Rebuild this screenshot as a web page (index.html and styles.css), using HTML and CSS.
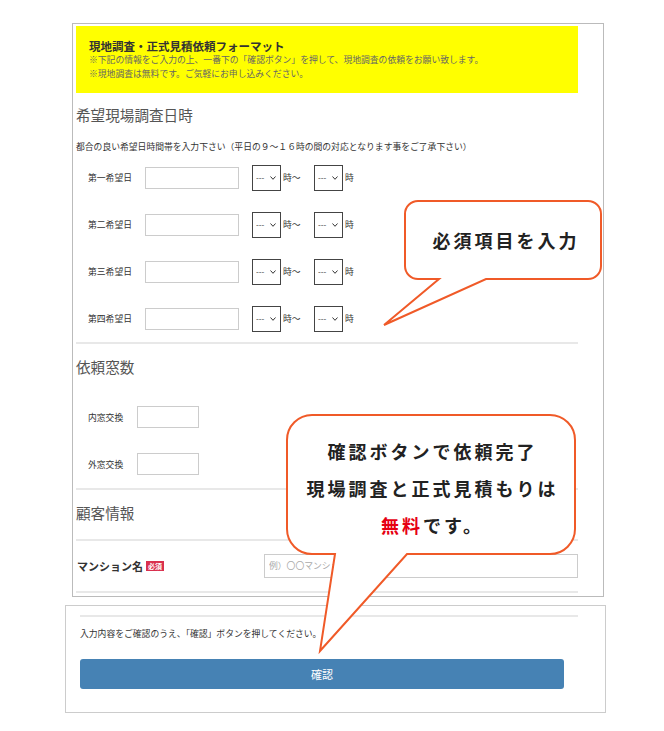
FILE: index.html
```html
<!DOCTYPE html>
<html lang="ja">
<head>
    <meta charset="UTF-8">
    <meta name="viewport" content="width=device-width, initial-scale=1.0">
    <title>現地調査・正式見積依頼フォーマット</title>
    <link rel="stylesheet" href="styles.css">
</head>
<body>
    <div class="page">
        <div class="form-box">
            <div class="notice">
                <p class="notice-title">現地調査・正式見積依頼フォーマット</p>
                <p>※下記の情報をご入力の上、一番下の「確認ボタン」を押して、現地調査の依頼をお願い致します。</p>
                <p>※現地調査は無料です。ご気軽にお申し込みください。</p>
            </div>

            <h2>希望現場調査日時</h2>
            <p class="desc">都合の良い希望日時間帯を入力下さい（平日の９～１６時の間の対応となります事をご了承下さい）</p>
            <div class="rows">
                <div class="row">
                    <label class="label-date">第一希望日</label>
                    <input type="text" class="input-date">
                    <span class="sel"><select><option>---</option></select><svg viewBox="0 0 6 4"><polyline points="0.5,0.5 3,3.3 5.5,0.5"/></svg></span>
                    <span class="unit-from">時～</span>
                    <span class="sel"><select><option>---</option></select><svg viewBox="0 0 6 4"><polyline points="0.5,0.5 3,3.3 5.5,0.5"/></svg></span>
                    <span class="unit-to">時</span>
                </div>
                <div class="row">
                    <label class="label-date">第二希望日</label>
                    <input type="text" class="input-date">
                    <span class="sel"><select><option>---</option></select><svg viewBox="0 0 6 4"><polyline points="0.5,0.5 3,3.3 5.5,0.5"/></svg></span>
                    <span class="unit-from">時～</span>
                    <span class="sel"><select><option>---</option></select><svg viewBox="0 0 6 4"><polyline points="0.5,0.5 3,3.3 5.5,0.5"/></svg></span>
                    <span class="unit-to">時</span>
                </div>
                <div class="row">
                    <label class="label-date">第三希望日</label>
                    <input type="text" class="input-date">
                    <span class="sel"><select><option>---</option></select><svg viewBox="0 0 6 4"><polyline points="0.5,0.5 3,3.3 5.5,0.5"/></svg></span>
                    <span class="unit-from">時～</span>
                    <span class="sel"><select><option>---</option></select><svg viewBox="0 0 6 4"><polyline points="0.5,0.5 3,3.3 5.5,0.5"/></svg></span>
                    <span class="unit-to">時</span>
                </div>
                <div class="row">
                    <label class="label-date">第四希望日</label>
                    <input type="text" class="input-date">
                    <span class="sel"><select><option>---</option></select><svg viewBox="0 0 6 4"><polyline points="0.5,0.5 3,3.3 5.5,0.5"/></svg></span>
                    <span class="unit-from">時～</span>
                    <span class="sel"><select><option>---</option></select><svg viewBox="0 0 6 4"><polyline points="0.5,0.5 3,3.3 5.5,0.5"/></svg></span>
                    <span class="unit-to">時</span>
                </div>
            </div>
            <hr class="sep">

            <h2>依頼窓数</h2>
            <div class="rows rows-count">
                <div class="row">
                    <label class="label-count">内窓交換</label>
                    <input type="text" class="input-count">
                </div>
                <div class="row">
                    <label class="label-count">外窓交換</label>
                    <input type="text" class="input-count">
                </div>
            </div>
            <hr class="sep">

            <h2>顧客情報</h2>
            <hr class="sep sep-head">
            <div class="row row-name">
                <label class="label-name">マンション名<span class="badge">必須</span></label>
                <input type="text" class="input-name" placeholder="例）〇〇マンション">
            </div>
            <hr class="sep">
        </div>

        <div class="confirm-box">
            <hr class="sep">
            <p class="confirm-text">入力内容をご確認のうえ、「確認」ボタンを押してください。</p>
            <button class="confirm-btn">確認</button>
        </div>
    </div>

    <svg class="callouts" width="664" height="731" viewBox="0 0 664 731">
        <path d="M418,201 H588 A13,13 0 0 1 601,214 V266 A13,13 0 0 1 588,279 H486 L384,325 L439,279 H418 A13,13 0 0 1 405,266 V214 A13,13 0 0 1 418,201 Z"/>
        <path d="M312,415 H550 A25,25 0 0 1 575,440 V529 A25,25 0 0 1 550,554 H407 L320,651 L335,554 H312 A25,25 0 0 1 287,529 V440 A25,25 0 0 1 312,415 Z"/>
    </svg>
    <div class="bubble-text bubble-one">必須項目を入力</div>
    <div class="bubble-text bubble-two">
        確認ボタンで依頼完了<br>
        現場調査と正式見積もりは<br>
        <span class="free">無料</span>です。
    </div>
</body>
</html>
```

FILE: styles.css
```css
body {
    margin: 0;
    width: 664px;
    height: 731px;
    position: relative;
    background: #fff;
    color: #333;
    font-family: "Noto Sans CJK JP", "Noto Sans", sans-serif;
}
p {
    margin: 0;
}
.page {
    padding-top: 23px;
}
.form-box {
    box-sizing: border-box;
    width: 532px;
    margin-left: 72px;
    padding: 2px 25px 3px 3px;
    border: 1px solid #bbb;
}
.notice {
    box-sizing: border-box;
    height: 67px;
    padding: 13px 13px 0;
    background: #ffff00;
}
.notice p {
    font-size: 8.8px;
    line-height: 14px;
    color: #666;
}
.notice .notice-title {
    font-size: 11.5px;
    font-weight: bold;
    color: #333;
}
h2 {
    margin: 12px 0 0;
    font-size: 14.6px;
    font-weight: normal;
    line-height: 20px;
    color: #555;
}
.sep + h2 {
    margin-top: 13px;
}
.desc {
    margin-top: 15px;
    font-size: 8.8px;
    line-height: 14px;
}
.sep {
    height: 2px;
    margin: 0;
    border: none;
    background: #e8e8e8;
}
.sep-head {
    margin-top: 16px;
}
.row {
    display: flex;
    align-items: center;
    height: 47px;
    font-size: 8.8px;
}
.rows-count {
    margin-top: 16.5px;
}
.label-date {
    width: 57px;
    padding-left: 12px;
}
.label-count {
    width: 49px;
    padding-left: 12px;
}
input {
    box-sizing: border-box;
    margin: 0;
    border: 1px solid #ccc;
    background: #fff;
    font-family: inherit;
}
.input-date {
    width: 94px;
    height: 22px;
}
.input-count {
    width: 62px;
    height: 22px;
}
.sel {
    position: relative;
    display: inline-block;
    width: 29px;
    height: 26px;
    margin-left: 13px;
}
.sel + .unit-from + .sel {
    margin-left: 0;
}
.sel select {
    appearance: none;
    -webkit-appearance: none;
    box-sizing: border-box;
    width: 29px;
    height: 26px;
    margin: 0;
    padding: 0 0 0 3px;
    border: 1px solid #444;
    border-radius: 0;
    background: #fff;
    color: #333;
    font-family: inherit;
    font-size: 8px;
}
.sel svg {
    position: absolute;
    right: 5px;
    top: 11px;
    width: 6px;
    height: 4px;
    fill: none;
    stroke: #333;
    stroke-width: 1;
}
.unit-from {
    width: 31px;
    padding-left: 2px;
}
.unit-to {
    padding-left: 2px;
}
.row-name {
    height: 50px;
}
.label-name {
    display: flex;
    align-items: center;
    width: 187px;
    padding-left: 1px;
    font-size: 11px;
    font-weight: bold;
    color: #333;
}
.badge {
    margin-left: 3px;
    padding: 0 2px;
    background: #d9304e;
    color: #fff;
    font-size: 7px;
    line-height: 10px;
}
.input-name {
    flex: 1;
    height: 24px;
    padding-left: 4px;
    font-size: 8.8px;
}
.input-name::placeholder {
    color: #aaa;
}
.confirm-box {
    box-sizing: border-box;
    width: 541px;
    margin: 8px 0 0 65px;
    padding: 9px 27px 23px 14px;
    border: 1px solid #ccc;
}
.confirm-text {
    margin-top: 10px;
    font-size: 8.8px;
    line-height: 14px;
}
.confirm-btn {
    display: block;
    width: 484px;
    height: 30px;
    margin-top: 18px;
    border: none;
    border-radius: 3px;
    background: #4682b4;
    color: #fff;
    font-family: inherit;
    font-size: 11px;
}
.callouts {
    position: absolute;
    left: 0;
    top: 0;
    pointer-events: none;
}
.callouts path {
    fill: #fff;
    stroke: #f05a28;
    stroke-width: 2;
    stroke-linejoin: miter;
}
.bubble-text {
    position: absolute;
    color: #222;
    font-size: 18px;
    font-weight: bold;
    letter-spacing: 3px;
    text-align: center;
}
.bubble-one {
    left: 408px;
    top: 201px;
    width: 196px;
    line-height: 78px;
}
.bubble-two {
    left: 287px;
    top: 433px;
    width: 291px;
    line-height: 37px;
}
.free {
    color: #e60012;
}
```
